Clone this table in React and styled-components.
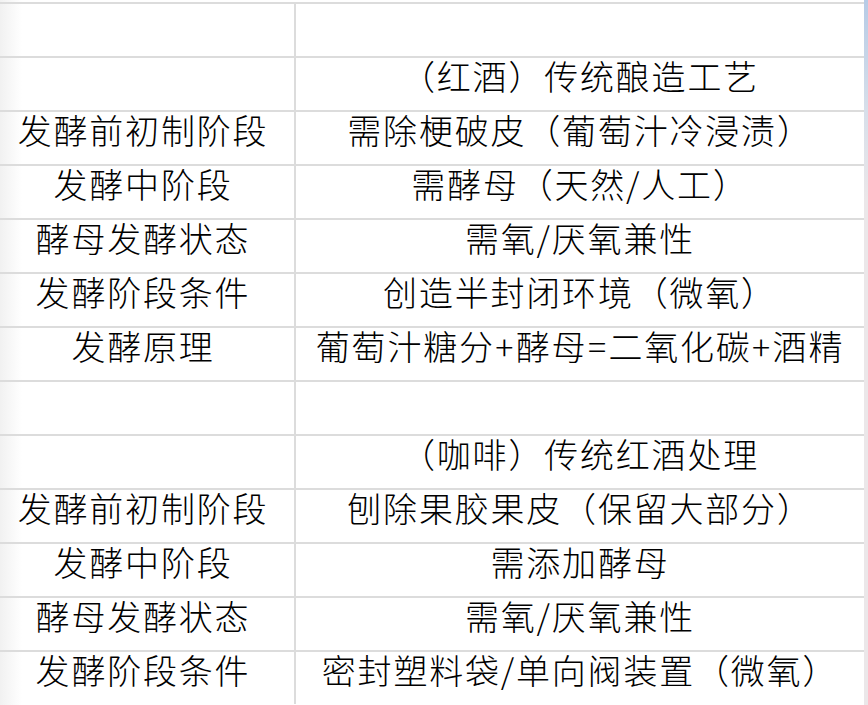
import React from "react";
import styled, { createGlobalStyle } from "styled-components";

const GlobalStyle = createGlobalStyle`
  html, body {
    margin: 0;
    padding: 0;
    background: #ffffff;
  }
  body {
    font-family: "Noto Sans CJK SC", "Noto Sans", sans-serif;
    color: #000000;
  }
`;

const Page = styled.div`
  width: 868px;
  height: 705px;
  display: flex;
  overflow: hidden;
  background: linear-gradient(to right, #f1f1f1 0px, #ffffff 22px);
`;

const Sheet = styled.div`
  flex: 1;
  padding-top: 2px;
  display: grid;
  grid-template-columns: 296px 1fr;
  grid-auto-rows: 54px;
  align-content: start;
`;

const Cell = styled.div`
  border-top: 2px solid #dcdcdc;
  border-right: ${(p) => (p.$first ? "2px solid #dcdcdc" : "none")};
  display: flex;
  justify-content: center;
  align-items: flex-start;
  font-size: 34px;
  font-weight: 300;
  line-height: 34px;
  padding-top: 1px;
  letter-spacing: 1.8px;
  white-space: nowrap;
  padding-right: ${(p) => (p.$first ? 8 : 0)}px;
  box-sizing: border-box;
  background: ${(p) => (p.$first ? "transparent" : "#ffffff")};
`;

const Sign = styled.span`
  margin: 0 0.5px;
`;

const Scroll = styled.div`
  width: 4px;
  background: linear-gradient(to bottom, #b6cbe6 0px, #d7dfea 110px, #ebe7e9 200px, #ebe7e9 100%);
`;

const rows = [
  ["", ""],
  ["", "（红酒）传统酿造工艺"],
  ["发酵前初制阶段", "需除梗破皮（葡萄汁冷浸渍）"],
  ["发酵中阶段", "需酵母（天然/人工）"],
  ["酵母发酵状态", "需氧/厌氧兼性"],
  ["发酵阶段条件", "创造半封闭环境（微氧）"],
  ["发酵原理", "葡萄汁糖分+酵母=二氧化碳+酒精"],
  ["", ""],
  ["", "（咖啡）传统红酒处理"],
  ["发酵前初制阶段", "刨除果胶果皮（保留大部分）"],
  ["发酵中阶段", "需添加酵母"],
  ["酵母发酵状态", "需氧/厌氧兼性"],
  ["发酵阶段条件", "密封塑料袋/单向阀装置（微氧）"],
];

// widen the ascii operators a touch, they run wider in the source sheet
const renderValue = (text) =>
  text.split(/([+=])/).map((part, i) =>
    part === "+" || part === "=" ? <Sign key={i}>{part}</Sign> : part
  );

export default function App() {
  return (
    <>
      <GlobalStyle />
      <Page>
        <Sheet>
          {rows.map(([label, value], i) => (
            <React.Fragment key={i}>
              <Cell $first>{label}</Cell>
              <Cell>{renderValue(value)}</Cell>
            </React.Fragment>
          ))}
        </Sheet>
        <Scroll />
      </Page>
    </>
  );
}
